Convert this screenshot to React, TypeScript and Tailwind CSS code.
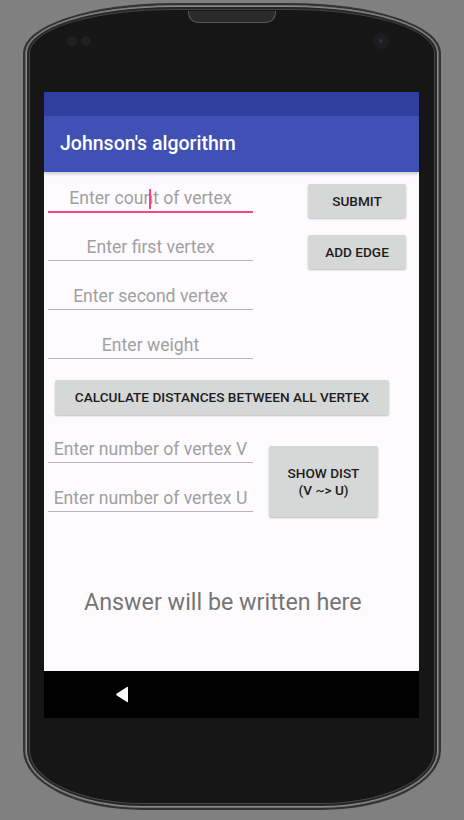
import React from 'react';

const font = { fontFamily: 'Roboto, "Noto Sans", sans-serif' };

type FieldProps = {
  hint: string;
  active?: boolean;
  first?: boolean;
};

// EditText with centered hint and underline
const Field: React.FC<FieldProps> = ({ hint, active, first }) => (
  <div className={first ? 'pt-[14px]' : 'pt-[24px]'}>
    <div className="relative h-[24px] flex items-center justify-center text-[17.6px] leading-[24px] text-[#a0a0a0] whitespace-nowrap">
      {hint}
      {active && <span className="absolute left-[101px] top-[3px] w-[2px] h-[20px] bg-[#ff4081]" />}
    </div>
    <div className={active ? 'mt-[1px] h-[2px] bg-[#ff4081] -mb-[2px]' : 'mt-[1px] h-[1px] bg-[#b5b5b5] -mb-[1px]'} />
  </div>
);

const Btn: React.FC<{ className: string; children: React.ReactNode }> = ({ className, children }) => (
  <div
    className={`flex items-center justify-center text-center bg-[#d6d7d7] rounded-[2px] shadow-[0_1px_2px_rgba(0,0,0,0.25)] text-[13.6px] font-medium text-[#1c1c1c] leading-[17px] ${className}`}
  >
    {children}
  </div>
);

export default function App() {
  return (
    <div className="w-[464px] h-[820px] bg-[#808080] overflow-hidden pt-[3px] pl-[23px]" style={font}>
      <div className="relative w-[418px] h-[807px] bg-[#161616] border-[2px] border-[#333] rounded-tl-[150px_50px] rounded-tr-[150px_50px] rounded-bl-[120px_60px] rounded-br-[120px_60px] shadow-[inset_0_0_0_1px_#6a6a6a,inset_0_0_0_2px_#8a8a8a,inset_0_0_0_4px_#262626,inset_0_0_0_5px_#444] pt-[87px] pl-[19px]">
        {/* speaker grille */}
        <div className="absolute left-[163px] top-[6px] w-[88px] h-[12px] rounded-b-[10px] bg-[#2b2b2b] border border-t-0 border-[#595959]" />
        {/* sensors */}
        <div className="absolute left-[42px] top-[31px] w-[10px] h-[10px] rounded-full bg-[#202020]" />
        <div className="absolute left-[56px] top-[31px] w-[10px] h-[10px] rounded-full bg-[#202020]" />
        {/* camera */}
        <div className="absolute left-[348px] top-[28px] w-[16px] h-[16px] rounded-full bg-[#1d1d1d] flex items-center justify-center">
          <div className="w-[4px] h-[4px] rounded-full bg-[#2c2c5c]" />
        </div>

        {/* screen */}
        <div className="w-[375px] h-[626px] flex flex-col">
          <div className="h-[24px] bg-[#303f9f]" />
          <div className="relative z-10 h-[56px] bg-[#3f51b5] flex items-center pl-[16px] text-white text-[19.5px] font-medium shadow-[0_2px_3px_rgba(0,0,0,0.2)]">
            Johnson's algorithm
          </div>

          <div className="flex-1 bg-[#fefbfe] flex flex-col">
            <div className="flex">
              <div className="ml-[4px] w-[205px]">
                <Field hint="Enter count of vertex" active first />
                <Field hint="Enter first vertex" />
                <Field hint="Enter second vertex" />
                <Field hint="Enter weight" />
              </div>
              <div className="ml-[55px] pt-[12px] flex flex-col gap-[17px]">
                <Btn className="w-[98px] h-[34px]">SUBMIT</Btn>
                <Btn className="w-[98px] h-[34px]">ADD EDGE</Btn>
              </div>
            </div>

            <Btn className="ml-[11px] mt-[22px] w-[334px] h-[35px]">CALCULATE DISTANCES BETWEEN ALL VERTEX</Btn>

            <div className="flex">
              <div className="ml-[4px] w-[205px] -mt-[2px]">
                <Field hint="Enter number of vertex V" />
                <Field hint="Enter number of vertex U" />
              </div>
              <Btn className="ml-[16px] mt-[31px] w-[109px] h-[71px]">
                SHOW DIST
                <br />
                (V ~&gt; U)
              </Btn>
            </div>

            <div className="mt-[71px] pl-[40px] text-[23.3px] leading-[28px] text-[#757575]">
              Answer will be written here
            </div>
          </div>

          <div className="h-[47px] bg-black flex items-center pl-[71px]">
            <svg width="14" height="17" viewBox="0 0 14 17">
              <path d="M13 1.5 L13 15.5 Q13 16.5 12 16 L1.5 9.2 Q0.8 8.5 1.5 7.8 L12 1 Q13 0.5 13 1.5 Z" fill="white" />
            </svg>
          </div>
        </div>
      </div>
    </div>
  );
}
